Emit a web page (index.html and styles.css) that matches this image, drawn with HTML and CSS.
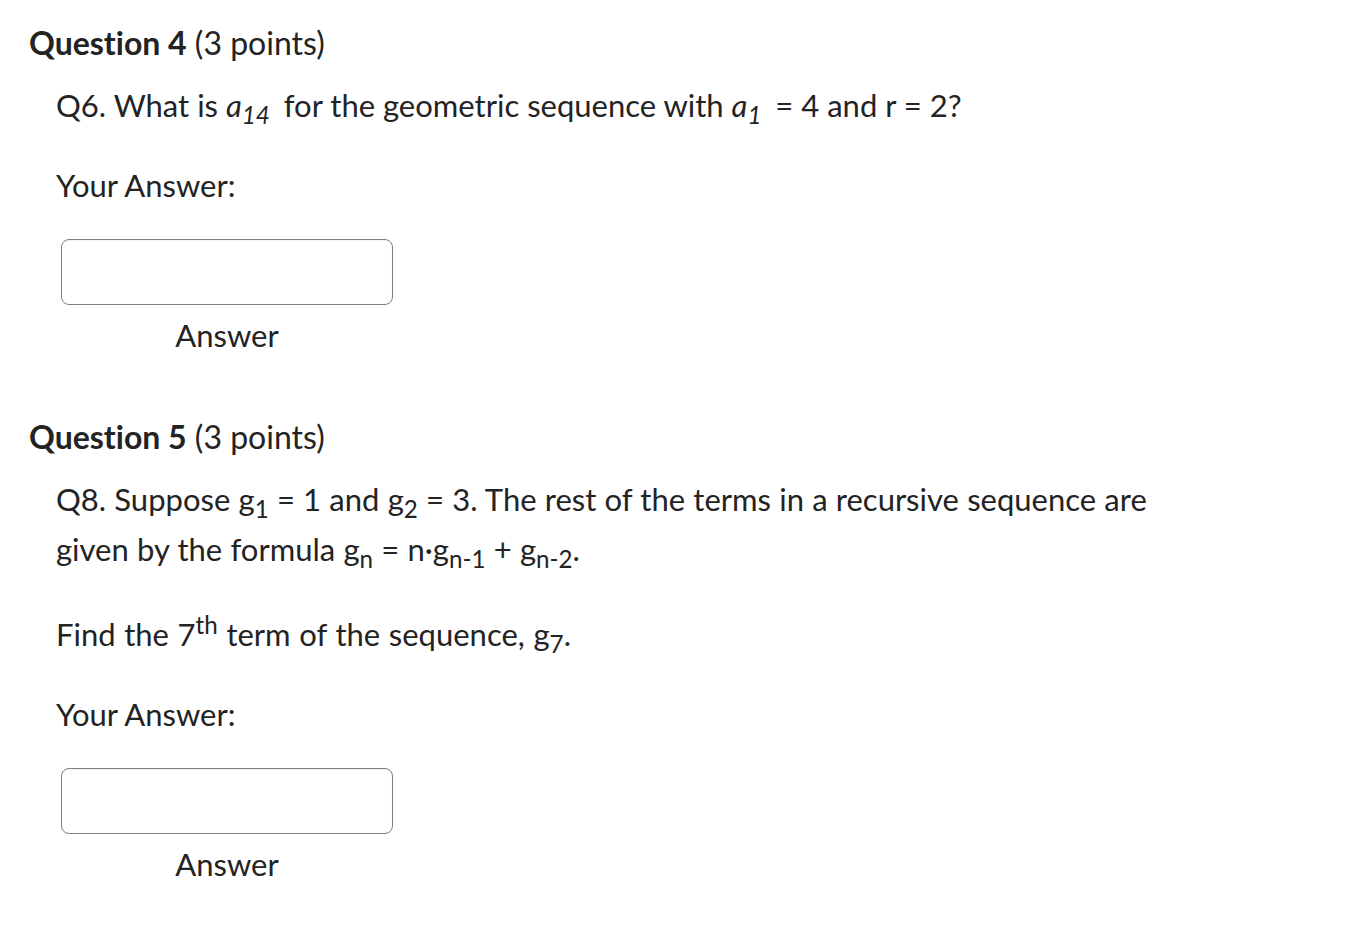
FILE: index.html
```html
<!DOCTYPE html>
<html>
<head>
<meta charset="utf-8">
<link rel="stylesheet" href="styles.css">
</head>
<body>
<div class="page">
  <section class="question">
    <h2 class="q-title"><strong>Question 4</strong> (3 points)</h2>
    <div class="q-body">
      <p class="line">Q6. What is <i>a<sub>14</sub></i><span class="gap"></span> for the geometric sequence with <i>a<sub>1</sub></i><span class="gap"></span> = 4 and r = 2?</p>
      <p class="your">Your Answer:</p>
      <div class="answer">
        <div class="box"></div>
        <div class="label">Answer</div>
      </div>
    </div>
  </section>
  <section class="question">
    <h2 class="q-title"><strong>Question 5</strong> (3 points)</h2>
    <div class="q-body">
      <p class="line para">Q8. Suppose g<sub>1</sub> = 1 and g<sub>2</sub> = 3. The rest of the terms in a recursive sequence are given by the formula g<sub>n</sub> = n·g<sub>n-1</sub> + g<sub>n-2</sub>.</p>
      <p class="line find">Find the 7<sup>th</sup> term of the sequence, g<sub>7</sub>.</p>
      <p class="your">Your Answer:</p>
      <div class="answer">
        <div class="box"></div>
        <div class="label">Answer</div>
      </div>
    </div>
  </section>
</div>
</body>
</html>
```
FILE: styles.css
```css
html, body { margin: 0; padding: 0; background: #fff; }
body { font-family: Lato, "Noto Sans", sans-serif; color: #232323; font-variant-ligatures: none; }
.page { padding: 18px 0 0 29px; }
.question { margin-bottom: 52px; }
.q-title { font-size: 32px; font-weight: 400; margin: 0; line-height: 50px; }
.q-title strong { font-weight: 700; }
.q-body { padding-left: 27px; font-size: 31px; width: 1105px; }
.line { margin: 12px 0 0; line-height: 50px; }
.line.para { word-spacing: 0.3px; }
.line.find { margin-top: 35px; word-spacing: 0.7px; }
.line i { font-style: italic; }
.gap { display: inline-block; width: 6px; }
sub, sup { font-size: 78%; line-height: 0; position: relative; vertical-align: baseline; }
sub { bottom: -0.3em; }
sup { top: -0.5em; }
.your { margin: 30px 0 0; line-height: 50px; }
.answer { width: 332px; margin: 29px 0 0 5px; display: flex; flex-direction: column; align-items: center; }
.box { height: 64px; border: 1px solid #808080; border-radius: 8px; align-self: stretch; box-shadow: inset 0 1px 2px rgba(0,0,0,0.06); }
.label { margin-top: 5px; line-height: 50px; }
```
